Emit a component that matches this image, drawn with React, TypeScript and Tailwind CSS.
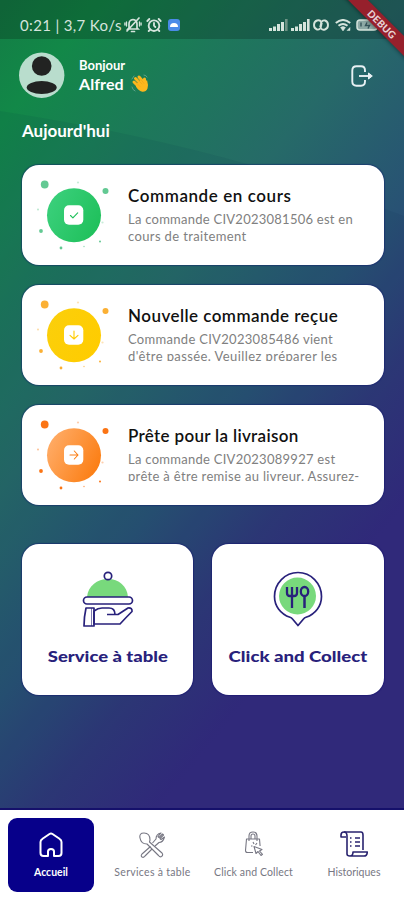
import React from "react";
import { AlarmClock } from "lucide-react";

const orders = [
  {
    title: "Commande en cours",
    lines: ["La commande CIV2023081506 est en", "cours de traitement"],
    titleClass: "tracking-[0.58px]",
    lineClass: ["tracking-[0.25px]", "tracking-[0.37px]"],
    clipped: false,
    from: "#3bd07c",
    to: "#1fc05b",
    dot: "#63c993",
    icon: "M70.5 60.5l2.4 2.4 4.8-5",
  },
  {
    title: "Nouvelle commande reçue",
    lines: ["Commande CIV2023085486 vient", "d'être passée. Veuillez préparer les"],
    titleClass: "tracking-[0.45px]",
    lineClass: ["tracking-[0.3px]", "tracking-[0.41px]"],
    clipped: true,
    from: "#fbcf0b",
    to: "#ffcc00",
    dot: "#fbb034",
    icon: "M74 56v8m-4-3.7 4 3.7 4-3.7",
  },
  {
    title: "Prête pour la livraison",
    lines: ["La commande CIV2023089927 est", "prête à être remise au livreur. Assurez-"],
    titleClass: "tracking-[0.32px]",
    lineClass: ["tracking-[0.27px]", "tracking-[0.33px]"],
    clipped: true,
    from: "#ffad69",
    to: "#fb7d12",
    dot: "#fb7414",
    icon: "M70 60h8m-3.7-4 3.7 4-3.7 4",
  },
];

const StatusBar = () => {
  return (
    <div className="flex h-[39px] shrink-0 items-end justify-between bg-black/20 pb-[4px] pl-5 pr-[24px] text-[#d5e4dc]">
      <div className="flex items-center">
        <span className="w-[102px] whitespace-nowrap text-[15px] leading-5 tracking-[0.35px]">0:21 | 3,7 Ko/s</span>
        <svg className="ml-[2px] h-4 w-[18px]" viewBox="0 0 18 16" fill="none" stroke="currentColor" strokeWidth="1.7" strokeLinecap="round">
          <path d="M5 11V7q0-4 4-4.500 4 .5 4 4.500v4l1 1H4zM7.500 14.500h3M15 1 3 14" />
          <path d="M2.500 5v4M.9 6v2M15.500 5v4M17.100 6v2" strokeWidth="1.300" />
        </svg>
        <AlarmClock className="ml-[4px] h-4 w-4" strokeWidth={2.8} />
        <span className="ml-[6px] flex h-3 w-3 items-center justify-center rounded-[3px] bg-[#4b8be8]">
          <span className="h-1 w-2 rounded-t-full bg-white" />
        </span>
      </div>
      <div className="flex h-5 items-center">
        <Signal last="#6d9385" />
        <Signal last="#d5e4dc" />
        <svg className="h-3 w-4" viewBox="0 0 16 12" fill="none" stroke="currentColor" strokeWidth="1.900" strokeLinecap="round">
          <path d="M7 9.800Q5.500 11 4 10.500 1 9.500 1 6t3-4.500q3-1 4 1.500Q9 6 7.500 7.500" />
          <path d="M9 2.200Q10.500 1 12 1.500 15 2.500 15 6t-3 4.500q-3 1-4-1.500Q7 6 8.500 4.500" />
        </svg>
        <svg className="ml-[6px] h-3 w-4" viewBox="0 0 16 12" fill="none" stroke="currentColor" strokeWidth="2">
          <path d="M.8 4Q8-2 15.200 4M3.500 6.800q4.500-3.600 9 0" />
          <path d="M5.500 8.500Q8 6.500 10.500 8.500L8 12zM12 11.500l3-3v3z" fill="currentColor" strokeWidth=".5" />
        </svg>
        <svg className="ml-[5px] h-3 w-6" viewBox="0 0 24 12">
          <rect x="1" y="1" width="20" height="10" rx="3" fill="#8da9a5" stroke="#d5e4dc" strokeWidth="1.5" />
          <path d="M5 3.500v4m6-4-1.500 3h4L12 9.500" stroke="#35545a" strokeWidth="1.4" fill="none" />
          <path d="M22.500 4v4" stroke="#d5e4dc" strokeWidth="1.500" />
        </svg>
      </div>
    </div>
  );
};

const Signal = ({ last }: { last: string }) => {
  return (
    <svg className="mr-[3px] h-3 w-[19px]" viewBox="0 0 19 12" fill="#d5e4dc">
      <rect x="0" y="9" width="3" height="3" />
      <rect x="4" y="7.500" width="3" height="4.500" />
      <rect x="8" y="5" width="3" height="7" />
      <rect x="12" y="3" width="3" height="9" />
      <rect x="16" y="0" width="2.600" height="12" fill={last} />
    </svg>
  );
};

const Header = () => {
  return (
    <div className="flex h-[71px] shrink-0 items-center pl-[19px] pr-[31px] text-white">
      <svg className="h-[46px] w-[46px]" viewBox="0 0 46 46">
        <circle cx="22.700" cy="23.200" r="22.700" fill="#b9ddcd" />
        <circle cx="22.700" cy="14" r="9.800" fill="#222322" />
        <ellipse cx="22.700" cy="35.500" rx="15" ry="6.500" fill="#222322" />
      </svg>
      <div className="ml-[14px] flex flex-col">
        <span className="text-[13px] font-bold leading-[17px]">Bonjour</span>
        <div className="flex items-center">
          <span className="w-[46px] whitespace-nowrap text-[16px] font-bold leading-[19px] tracking-[0.1px]">Alfred</span>
          <WavingHand />
        </div>
      </div>
      <svg className="ml-auto mt-[2px] h-[22px] w-[22px]" viewBox="0 0 22 22" fill="none" stroke="#e8f1f4" strokeWidth="1.900" strokeLinejoin="round">
        <path d="M14 7V5.500Q14 1.300 10 1.300H5.500Q1.300 1.300 1.300 5.500v11q0 4.200 4.200 4.200H10q4 0 4-4.200V15" />
        <path d="M8 11h10" />
        <path d="M17.500 8l3.800 3-3.800 3z" fill="#e8f1f4" strokeWidth="1" />
      </svg>
    </div>
  );
};

const WavingHand = () => {
  return (
    <svg className="ml-[6px] h-[19px] w-[18px]" viewBox="0 0 18 19" fill="none" strokeLinecap="round">
      <g stroke="#fbb71d" strokeWidth="3">
        <path d="M3 8l6 6M4.500 4.500l7 7M8 3l6 7M13.500 9V5" />
      </g>
      <path d="M5 10l6-5 3 3 2-2q1.600 5 .5 8.500-1.500 3.500-5 3.300-3.500-.3-6.500-5z" fill="#fbb71d" />
      <path d="M5 8.500l4 4M7 6l4 4M10 5.500l3 4" stroke="#eba31a" strokeWidth=".6" />
      <path d="M1 5l2-3M1 13q.5 3 3 4M13 1q2 0 3 2" stroke="#6aa995" strokeWidth=".8" />
    </svg>
  );
};

const OrderCard = ({ order, id }: { order: (typeof orders)[0]; id: string }) => {
  return (
    <div className="flex h-[100px] shrink-0 rounded-[17px] bg-white shadow-[0_0_1px_1px_rgba(12,20,110,0.4)]">
      <svg className="h-[100px] w-[106px] shrink-0" viewBox="22 10 106 100">
        <defs>
          <linearGradient id={id} x1="0" y1="0.2" x2="1" y2="0.7">
            <stop offset="0" stopColor={order.from} />
            <stop offset="1" stopColor={order.to} />
          </linearGradient>
        </defs>
        <circle cx="74" cy="60.300" r="27" fill={`url(#${id})`} />
        <rect x="64" y="50.300" width="19.300" height="19.500" rx="5" fill="#fff" />
        <path d={order.icon} stroke={order.to} strokeWidth="1.100" fill="none" strokeLinecap="round" strokeLinejoin="round" />
        <g fill={order.dot}>
          <circle cx="44.700" cy="29.500" r="3.900" />
          <circle cx="105.500" cy="36" r="3" />
          <circle cx="41" cy="76" r="1.900" />
          <circle cx="61" cy="93" r="1.400" />
          <circle cx="100" cy="86.500" r="1" />
          <circle cx="84" cy="91.500" r=".8" opacity=".6" />
          <circle cx="38" cy="54.500" r=".9" opacity=".5" />
          <circle cx="78" cy="27.500" r="1.100" opacity=".35" />
          <circle cx="102.500" cy="67.500" r="1.100" opacity=".35" />
        </g>
      </svg>
      <div className="flex flex-col pt-[21px]">
        <h2 className={`whitespace-nowrap text-[17px] font-semibold leading-5 text-[#111] ${order.titleClass}`}>{order.title}</h2>
        <div className={order.clipped ? "mt-[5px] h-[30px] overflow-hidden" : "mt-[5px] h-[34px]"}>
          {order.lines.map((line, i) => (
            <p key={line} className={`whitespace-nowrap text-[13px] font-normal leading-[17px] text-[#808080] ${order.lineClass[i]}`}>
              {line}
            </p>
          ))}
        </div>
      </div>
    </div>
  );
};

const ServiceIcon = () => {
  return (
    <svg className="h-[56px] w-[52px]" viewBox="0 0 52 56" fill="none" stroke="#28217b" strokeWidth="1.700" strokeLinejoin="round">
      <path d="M5 26C6 15 15 8 26 8s19 7 20 18z" fill="#78d97c" stroke="none" />
      <circle cx="26" cy="5" r="3.700" fill="#fff" />
      <rect x="1.500" y="26" width="49" height="7" rx="3.500" fill="#fff" />
      <path d="M4 37h8v18H2q0-9 2-18z" />
      <path d="M12 40q4-3 8-3h7q6 0 6 6.500h-8M33 43.500h3l10-6.500q4.500-.5 4 3.500-6 6-12 12.500H12V40" />
      <path d="M9.500 37v18" strokeWidth=".6" />
    </svg>
  );
};

const CollectIcon = () => {
  return (
    <svg className="h-[56px] w-[50px]" viewBox="0 0 50 56" fill="none" stroke="#28217b" strokeWidth="1.700" strokeLinejoin="round">
      <path d="M25 54.500 19.500 48Q18.500 46.800 17 46.300C7.500 43 1.500 35 1.500 25.500a23.500 24 0 0 1 47 0C48.500 35 42.500 43 33 46.300Q31.500 46.800 30.500 48z" />
      <circle cx="24.500" cy="25" r="18.500" fill="#78d97c" stroke="none" />
      <path d="M14 16v6q0 3 3 3h4q3 0 3-3v-6M19 16v21" strokeWidth="2.300" />
      <ellipse cx="31.500" cy="20.500" rx="3.700" ry="4.500" strokeWidth="2.300" />
      <path d="M31.500 25v12" strokeWidth="2.500" />
    </svg>
  );
};

const navText = "whitespace-nowrap text-[10.500px] leading-[14px]";

const BottomNav = () => {
  return (
    <nav className="flex h-[92px] shrink-0 border-t-2 border-[#17106e] bg-white pt-2 text-[#777783]">
      <div className="flex w-[102px] shrink-0 justify-center">
        <div className="flex h-[74px] w-[86px] flex-col items-center rounded-[9px] bg-[#07008a] pt-[14px] text-white">
          <svg className="h-[26px] w-6" viewBox="0 0 24 26" fill="none" stroke="currentColor" strokeWidth="2" strokeLinejoin="round">
            <path d="M9 24H4.500Q1.500 24 1.500 21V10q0-2 2-3.200L10.500 2q1.500-1 3 0l7 4.800q2 1.200 2 3.200v11q0 3-3 3H15v-4.500q0-2.500-3-2.500t-3 2.500z" />
          </svg>
          <span className={`mt-[7px] font-bold ${navText}`}>Accueil</span>
        </div>
      </div>
      <div className="flex w-[101px] flex-col items-center pt-[14px]">
        <svg className="h-[26px] w-[27px]" viewBox="0 0 27 26" fill="none" stroke="currentColor" strokeWidth="1.100" strokeLinejoin="round">
          <path d="M10.500 10 23 21q1.500 2-.5 3.500-1.500 1-3-1L8 12Q2 12 1 6 0 1 5 1q6 0 6 7z" />
          <path d="M11.500 14.500 3 22q-1.500 2 0 3 1.500 1 3-1l7-7m3-3 4-3.500q4 0 5.500-5.500l-3.500 2.500-1-1L24.500 3l-1-1L20 5.500l-1-1L22 1q-5 1-5 6l-3.500 4" />
        </svg>
        <span className={`mt-[7px] tracking-[0.3px] ${navText}`}>Services à table</span>
      </div>
      <div className="flex w-[101px] flex-col items-center pt-[13px]">
        <svg className="h-[27px] w-[20px]" viewBox="0 0 20 27" fill="none" stroke="currentColor" strokeWidth="1.100" strokeLinejoin="round">
          <path d="M9 21.500H3.500q-2 0-2-2L2.500 8h13l.6 7" />
          <path d="M5 10V5q0-4 4-4t4 4v5M7 8V5q0-2 2-2t2 2v3" />
          <path d="M10 15.500l2 7 2-2 3 4 1.500-1.200-3-3.300 2.500-1.500zM9 11l1 2m3-1-1.500 2M7 15h1.500" />
        </svg>
        <span className={`mt-[7px] tracking-[0.12px] ${navText}`}>Click and Collect</span>
      </div>
      <div className="flex w-[100px] flex-col items-center pt-[13px]">
        <svg className="h-[27px] w-[28px]" viewBox="0 0 28 27" fill="none" stroke="#29236f" strokeWidth="1.600" strokeLinejoin="round">
          <path d="M6 6H1V4q0-3 3-3h17q2 0 2 3v15" />
          <path d="M4 1q3 0 3 4v18q0 2 3 2M10 25h14q3 0 3.300-4H13q0 4-3 4z" />
          <path d="M10 7h1.500m3.500 0h5M10 11h1.500m3.500 0h5M10 15h1.500m3.500 0h5" strokeWidth="1.300" />
        </svg>
        <span className={`mt-[7px] ${navText}`}>Historiques</span>
      </div>
    </nav>
  );
};

const App = () => {
  return (
    <div className="relative flex h-[900px] w-[404px] flex-col overflow-hidden bg-[linear-gradient(129deg,#137d45_0%,#128848_9%,#1d785a_22%,#266a68_35%,#285274_50%,#303779_62%,#342a7e_72%,#342a7e_100%)] font-['Lato','Open_Sans',sans-serif]">
      {/* faint curved band behind the content */}
      <svg className="absolute inset-0 h-[810px] w-[404px]" viewBox="0 0 404 810">
        <path d="M0 111Q220 145 404 216V810H0z" fill="#06204c" opacity=".07" />
      </svg>
      <div className="relative flex h-[808px] shrink-0 flex-col">
        <StatusBar />
        <Header />
        <h1 className="ml-[22px] mt-[11px] h-[44px] shrink-0 text-[17px] font-bold leading-5 text-white">Aujourd'hui</h1>
        <div className="flex flex-col gap-5 pl-[22px] pr-[20px]">
          {orders.map((order, i) => (
            <OrderCard key={order.title} order={order} id={`disc${i}`} />
          ))}
        </div>
        <div className="mt-[39px] flex gap-[19px] pl-[22px] pr-[20px] text-[15px] font-black text-[#28217b]">
          <div className="flex h-[151px] w-[171px] flex-col items-center rounded-[17px] bg-white pt-[27px] shadow-[0_0_1px_1px_rgba(12,10,110,0.4)]">
            <ServiceIcon />
            <span className="mt-[19px] scale-x-[1.23] whitespace-nowrap leading-5">Service à table</span>
          </div>
          <div className="flex h-[151px] w-[172px] flex-col items-center rounded-[17px] bg-white pt-[27px] shadow-[0_0_1px_1px_rgba(12,10,110,0.4)]">
            <CollectIcon />
            <span className="mt-[19px] scale-x-[1.24] whitespace-nowrap leading-5">Click and Collect</span>
          </div>
        </div>
      </div>
      <BottomNav />
      <div className="absolute -right-[34px] top-[17px] flex h-[14px] w-[112px] rotate-45 items-center justify-center bg-[#96202c] text-[10px] font-black tracking-[0.2px] text-[#e7d2d5] shadow-[0_1px_4px_rgba(0,0,0,0.4)]">
        DEBUG
      </div>
    </div>
  );
};

export default App;
